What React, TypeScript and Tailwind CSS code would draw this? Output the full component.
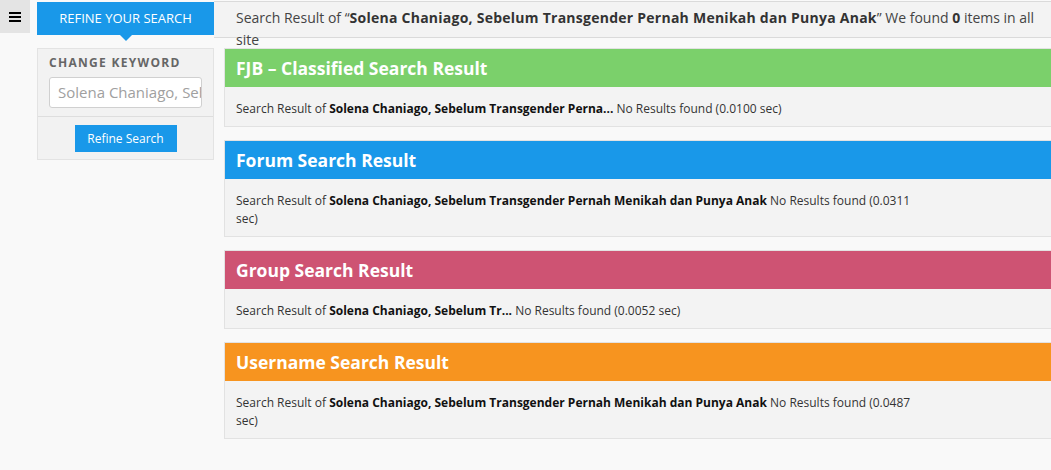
// Search result page — sidebar + per-category result cards
const KEYWORD = 'Solena Chaniago, Sebelum Transgender Pernah Menikah dan Punya Anak';

interface ResultSection {
  title: string;
  headerClass: string;
  keyword: string;
  time: string;
}

const SECTIONS: ResultSection[] = [
  { title: 'FJB – Classified Search Result', headerClass: 'bg-[#7bd06b]', keyword: 'Solena Chaniago, Sebelum Transgender Perna...', time: '0.0100' },
  { title: 'Forum Search Result', headerClass: 'bg-[#1998e9]', keyword: KEYWORD, time: '0.0311' },
  { title: 'Group Search Result', headerClass: 'bg-[#ce5373]', keyword: 'Solena Chaniago, Sebelum Tr...', time: '0.0052' },
  { title: 'Username Search Result', headerClass: 'bg-[#f7941f]', keyword: KEYWORD, time: '0.0487' },
];

function Sidebar() {
  return (
    <div className="w-[177px] shrink-0 ml-[7px] pt-[2px]">
      <div className="relative h-[33px] bg-[#1998e9] text-white text-[13px] flex items-center justify-center uppercase">
        Refine your search
        <span className="absolute left-1/2 -translate-x-1/2 top-full w-0 h-0 border-x-[6px] border-x-transparent border-t-[6px] border-t-[#1998e9]" />
      </div>
      <div className="mt-[13px] bg-[#f2f2f2] border border-[#e3e3e3]">
        <div className="px-[11px] pt-[6px] pb-[8px]">
          <div className="text-[12px] font-bold tracking-[1.3px] text-[#666] uppercase leading-[16px]">Change keyword</div>
          <div className="mt-[6px] h-[31px] bg-white border border-[#d0d0d0] rounded-[3px] pl-[8px] pr-[8px] flex items-center overflow-hidden whitespace-nowrap text-[15px] text-[#a0a0a0]">
            {KEYWORD}
          </div>
        </div>
        <div className="border-t border-[#dedede] flex justify-center pt-[8px] pb-[7px]">
          <button className="w-[102px] h-[27px] bg-[#1998e9] text-white text-[12px]">Refine Search</button>
        </div>
      </div>
    </div>
  );
}

function ResultCard({ section }: { section: ResultSection }) {
  return (
    <div className="border border-[#e2e2e2] border-r-0">
      <div className={`${section.headerClass} h-[38px] px-[11px] flex items-center text-white text-[17.5px] font-bold`}>
        {section.title}
      </div>
      <div className="bg-[#f3f3f3] px-[11px] pt-[13px] pb-[8px]">
        <p className="w-[690px] text-[12px] leading-[18px] text-[#333]">
          Search Result of <b className="text-[#111]">{section.keyword}</b> No Results found ({section.time} sec)
        </p>
      </div>
    </div>
  );
}

export default function App() {
  return (
    <div
      className="w-[1051px] min-h-[470px] bg-[#f9f9f9] flex overflow-hidden"
      style={{ fontFamily: '"Open Sans", "Liberation Sans", sans-serif' }}
    >
      <div className="w-[30px] h-[33px] shrink-0 bg-[#e4e4e4] flex flex-col items-center justify-center gap-[2px]">
        <span className="block w-[12px] h-[2px] bg-black" />
        <span className="block w-[12px] h-[2px] bg-black" />
        <span className="block w-[12px] h-[2px] bg-black" />
      </div>
      <Sidebar />
      <div className="flex-1 min-w-[837px]">
        <div className="h-[37px] mt-[1px] bg-[#f3f3f3] border-y border-[#dadada] pl-[22px]">
          <p className="w-[806px] text-[14px] leading-[22px] text-[#444] pt-[5px]">
            Search Result of “<b className="text-[#333] tracking-[0.25px]">{KEYWORD}</b>” We found <b className="text-[#333]">0</b> items in all site
          </p>
        </div>
        <div className="ml-[10px] mt-[10px] flex flex-col gap-[13px]">
          {SECTIONS.map((s) => (
            <ResultCard key={s.title} section={s} />
          ))}
        </div>
      </div>
    </div>
  );
}
